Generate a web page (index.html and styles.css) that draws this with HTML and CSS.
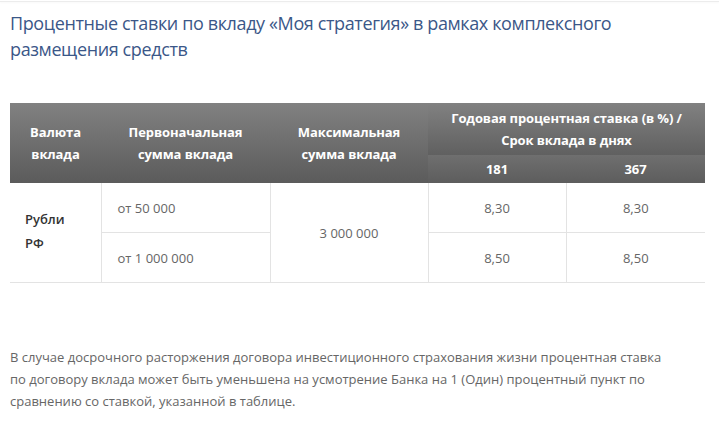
FILE: index.html
```html
<!DOCTYPE html>
<html lang="ru">
<head>
<meta charset="utf-8">
<link rel="stylesheet" href="styles.css">
</head>
<body>
<div class="topline"></div>
<div class="page">
  <h2 class="title">Процентные ставки по вкладу «Моя стратегия» в рамках комплексного размещения средств</h2>
  <table class="rates">
    <thead>
      <tr class="h1">
        <th rowspan="2" class="c1">Валюта<br>вклада</th>
        <th rowspan="2" class="c2">Первоначальная<br>сумма вклада</th>
        <th rowspan="2" class="c3">Максимальная<br>сумма вклада</th>
        <th colspan="2" class="cg">Годовая процентная ставка (в %) /<br>Срок вклада в днях</th>
      </tr>
      <tr class="h2">
        <th class="c4">181</th>
        <th class="c5">367</th>
      </tr>
    </thead>
    <tbody>
      <tr>
        <td rowspan="2" class="cur">Рубли<br>РФ</td>
        <td class="amt">от 50 000</td>
        <td rowspan="2" class="mid">3 000 000</td>
        <td class="mid">8,30</td>
        <td class="mid">8,30</td>
      </tr>
      <tr>
        <td class="amt">от 1 000 000</td>
        <td class="mid">8,50</td>
        <td class="mid">8,50</td>
      </tr>
    </tbody>
  </table>
  <p class="note">В случае досрочного расторжения договора инвестиционного страхования жизни процентная ставка по договору вклада может быть уменьшена на усмотрение Банка на 1 (Один) процентный пункт по сравнению со ставкой, указанной в таблице.</p>
</div>
</body>
</html>
```
FILE: styles.css
```css
html, body {
  margin: 0;
  padding: 0;
  background: #fff;
}
body {
  font-family: "Open Sans", "Liberation Sans", sans-serif;
}
.topline {
  height: 1px;
  margin-top: 1px;
  background: #ececec;
  box-shadow: 0 1px 2px rgba(0,0,0,0.04);
}
.page {
  padding: 0 14px 0 10px;
}
.title {
  margin: 8px 0 0;
  font-size: 18px;
  font-weight: 400;
  line-height: 26px;
  letter-spacing: -0.38px;
  color: #3b5788;
  width: 640px;
}
.rates {
  margin-top: 41px;
  width: 695px;
  border-collapse: collapse;
  font-size: 13px;
}
.rates th {
  color: #fff;
  font-weight: 700;
  font-size: 13px;
  line-height: 22px;
  letter-spacing: -0.1px;
  padding: 0;
  text-align: center;
}
.rates thead tr.h1 th {
  background: linear-gradient(#818181, #5b5b5b);
  height: 52px;
}
.rates thead tr.h1 th.cg {
  background: linear-gradient(#818181, #606060);
}
.rates thead tr.h2 th {
  height: 28px;
  background: linear-gradient(#6f6f6f, #5d5d5d);
}
.c1 { width: 91px; }
.c2 { width: 169px; }
.c3 { width: 158px; }
.c4 { width: 138px; }
.c5 { width: 139px; }
.rates td {
  height: 49px;
  padding: 0;
  color: #666;
  border-bottom: 1px solid #e3e3e3;
  border-left: 1px solid #e3e3e3;
}
.rates td.cur {
  border-left: none;
  color: #333;
  font-weight: 600;
  line-height: 24px;
  padding-left: 15px;
  padding-bottom: 4px;
}
.rates td.amt {
  padding-left: 16px;
}
.rates td.mid {
  text-align: center;
}
.note {
  margin: 63px 0 0;
  font-size: 13px;
  line-height: 22px;
  color: #666;
  width: 662px;
}
```
